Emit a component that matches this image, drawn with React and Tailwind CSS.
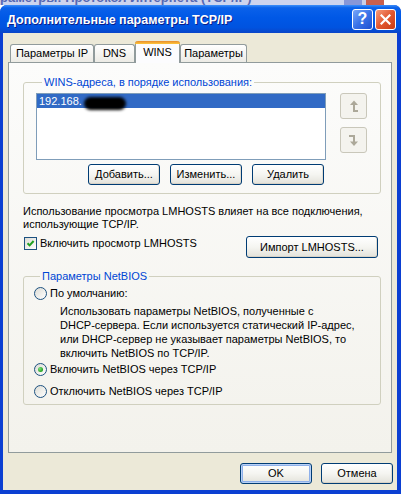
import React from "react";

function XPButton({ children, className = "", def = false }) {
  return (
    <div
      className={`flex items-center justify-center rounded-[3px] border border-[#003c74] bg-linear-to-b from-[#ffffff] via-[#f5f5f1] to-[#e3e2da] text-black ${
        def
          ? "shadow-[inset_0_0_0_1px_#b9d1f6,inset_0_0_0_2px_#8eb0ea]"
          : "shadow-[inset_0_-1px_0_#d8d2c6,inset_-1px_0_0_#e2ddd2]"
      } ${className}`}
    >
      {children}
    </div>
  );
}

function Tab({ children, className = "" }) {
  return (
    <div
      className={`h-[18px] flex items-center justify-center border border-b-0 border-[#919b9c] rounded-t-[3px] bg-linear-to-b from-[#ffffff] to-[#ecebe5] ${className}`}
    >
      {children}
    </div>
  );
}

function SelTab({ children, className = "" }) {
  return (
    <div
      className={`relative z-10 -mb-[1px] h-[22px] flex flex-col border-x border-[#919b9c] rounded-t-[3px] bg-[#fcfcfe] ${className}`}
    >
      <div className="h-[3px] -mx-[1px] rounded-t-[3px] bg-linear-to-b from-[#e68b2c] to-[#ffc73c]" />
      <div className="flex-1 flex items-center justify-center pb-[2px]">{children}</div>
    </div>
  );
}

function Radio({ checked }) {
  return (
    <div className="w-[13px] h-[13px] rounded-full border border-[#1c5180] bg-linear-to-br from-[#dcdcd5] to-[#ffffff] flex items-center justify-center shrink-0">
      {checked && (
        <div className="w-[5px] h-[5px] rounded-full bg-[radial-gradient(circle_at_35%_35%,#7ee07e,#21a121_70%)]" />
      )}
    </div>
  );
}

function Checkbox() {
  return (
    <div className="w-[13px] h-[13px] border border-[#1c5180] bg-linear-to-br from-[#dcdcd5] to-[#ffffff] flex items-center justify-center shrink-0">
      <svg width="9" height="9" viewBox="0 0 9 9">
        <path d="M1.5 4.2 L3.6 6.4 L7.6 2" fill="none" stroke="#21a121" strokeWidth="2" />
      </svg>
    </div>
  );
}

function ArrowBtn({ down }) {
  return (
    <div className="w-[27px] h-[26px] rounded-[3px] border border-[#c9c7ba] bg-[#f4f3ee] flex items-center justify-center">
      <svg width="11" height="13" viewBox="0 0 11 13">
        {down ? (
          <g fill="#aca899">
            <rect x="1" y="1" width="6" height="2" />
            <rect x="5" y="1" width="2" height="7" />
            <polygon points="2,7.5 6,12 10,7.5" />
          </g>
        ) : (
          <g fill="#aca899">
            <polygon points="2,5 6,0.5 10,5" />
            <rect x="5" y="4.5" width="2" height="7" />
            <rect x="5" y="10" width="5" height="2" />
          </g>
        )}
      </svg>
    </div>
  );
}

function TitleBar() {
  return (
    <div className="h-[28px] shrink-0 flex items-center pl-[7px] pr-[5px] bg-[linear-gradient(to_bottom,#3d8ff9_0%,#0a61ea_10%,#0058e6_45%,#0053e0_80%,#0a45c8_100%)]">
      <div className="flex-1 text-white font-bold text-[12.5px] leading-[16px] [text-shadow:1px_1px_0_#0a1e8a] pt-[2px]">
        Дополнительные параметры TCP/IP
      </div>
      <div className="flex gap-[2px]">
        <div className="w-[21px] h-[21px] rounded-[3px] border border-white bg-linear-to-br from-[#7aa8f8] via-[#3a72e8] to-[#1f4fd0] flex items-center justify-center text-white font-bold text-[16px] leading-none">
          ?
        </div>
        <div className="w-[21px] h-[21px] rounded-[3px] border border-white bg-linear-to-br from-[#f59a7a] via-[#e2572f] to-[#c93a12] flex items-center justify-center">
          <svg width="11" height="11" viewBox="0 0 11 11">
            <path d="M1.5 1.5 L9.5 9.5 M9.5 1.5 L1.5 9.5" stroke="white" strokeWidth="2.2" strokeLinecap="square" />
          </svg>
        </div>
      </div>
    </div>
  );
}

export default function App() {
  return (
    <div className="w-[406px] h-[496px] bg-white overflow-hidden font-['Liberation_Sans',Arial,sans-serif] text-[11px] leading-[13px] text-black">
      {/* background window strip */}
      <div className="h-[5px] flex overflow-hidden">
        <div className="w-[344px] bg-[#cdd4ee] overflow-hidden">
          <div className="-mt-[9px] pl-0 text-[13px] leading-[13px] font-bold text-[#5668b4] whitespace-nowrap">
            раметры: Протокол Интернета (TCP/IP)
          </div>
        </div>
        <div className="w-[18px] bg-[#8797d8]" />
        <div className="w-[4px] bg-[#c9cfe8]" />
        <div className="w-[18px] bg-[#c8604f]" />
        <div className="flex-1 bg-white" />
      </div>

      <div className="w-[401px] h-[489px] flex flex-col rounded-t-[7px] overflow-hidden bg-[#0b3fd2]">
        <TitleBar />
        <div className="flex-1 flex flex-col ml-[3px] mr-[4px] mb-[4px] bg-[#ece9d8] px-[5px] pt-[8px]">
          {/* tabs */}
          <div className="flex items-end h-[21px] pl-[2px]">
            <Tab className="w-[84px]">Параметры IP</Tab>
            <Tab className="w-[41px]">DNS</Tab>
            <SelTab className="w-[45px]">WINS</SelTab>
            <Tab className="w-[67px]">Параметры</Tab>
          </div>

          {/* panel */}
          <div className="h-[391px] border border-[#919b9c] bg-linear-to-b from-[#fcfcfb] to-[#f3f2ec] pl-[14px] pr-[10px] flex flex-col">
            <fieldset className="mt-[12px] border border-[#d0d0bf] rounded-[3px] pl-[12px] pr-[13px] pb-[8px]">
              <legend className="ml-[6px] px-[2px] text-[#0046d5] leading-[14px]">
                WINS-адреса, в порядке использования:
              </legend>
              <div className="flex pt-[4px]">
                <div className="w-[290px] flex flex-col">
                  <div className="h-[67px] border border-[#7f9db9] bg-white">
                    <div className="h-[14px] bg-[#316ac5] text-white flex items-center pl-[2px] whitespace-nowrap">
                      192.168.
                      <span className="inline-block w-[42px] h-[13px] bg-black rounded-full blur-[1.5px] ml-[2px] translate-y-[2px]" />
                    </div>
                  </div>
                  <div className="flex justify-end gap-[10px] mt-[4px] mr-[2px]">
                    <XPButton className="w-[72px] h-[21px]">Добавить...</XPButton>
                    <XPButton className="w-[72px] h-[21px]">Изменить...</XPButton>
                    <XPButton className="w-[72px] h-[21px]">Удалить</XPButton>
                  </div>
                </div>
                <div className="ml-[14px] flex flex-col gap-[8px]">
                  <ArrowBtn />
                  <ArrowBtn down />
                </div>
              </div>
            </fieldset>

            <p className="mt-[11px]">
              Использование просмотра LMHOSTS влияет на все подключения,
              <br />
              использующие TCP/IP.
            </p>

            <div className="flex justify-between items-start mt-[5px]">
              <div className="flex items-center ml-[1px] mt-[1px]">
                <Checkbox />
                <span className="ml-[3px]">Включить просмотр LMHOSTS</span>
              </div>
              <XPButton className="w-[132px] h-[22px] mr-[3px]">Импорт LMHOSTS...</XPButton>
            </div>

            <fieldset className="mt-[11px] border border-[#d0d0bf] rounded-[3px] pl-[10px] pr-[10px] pb-[6px]">
              <legend className="ml-[6px] px-[2px] text-[#0046d5] leading-[14px]">Параметры NetBIOS</legend>
              <div className="flex items-center mt-[4px] h-[13px]">
                <Radio />
                <span className="ml-[3px]">По умолчанию:</span>
              </div>
              <p className="ml-[26px] mt-[4px] leading-[14px]">
                Использовать параметры NetBIOS, полученные с
                <br />
                DHCP-сервера. Если используется статический IP-адрес,
                <br />
                или DHCP-сервер не указывает параметры NetBIOS, то
                <br />
                включить NetBIOS по TCP/IP.
              </p>
              <div className="flex items-center mt-[3px] h-[13px]">
                <Radio checked />
                <span className="ml-[3px]">Включить NetBIOS через TCP/IP</span>
              </div>
              <div className="flex items-center mt-[9px] h-[13px]">
                <Radio />
                <span className="ml-[3px]">Отключить NetBIOS через TCP/IP</span>
              </div>
            </fieldset>
          </div>

          {/* bottom buttons */}
          <div className="flex justify-end gap-[9px] mt-[10px] -mr-[1px]">
            <XPButton def className="w-[72px] h-[21px]">OK</XPButton>
            <XPButton className="w-[72px] h-[21px]">Отмена</XPButton>
          </div>
        </div>
      </div>
    </div>
  );
}
